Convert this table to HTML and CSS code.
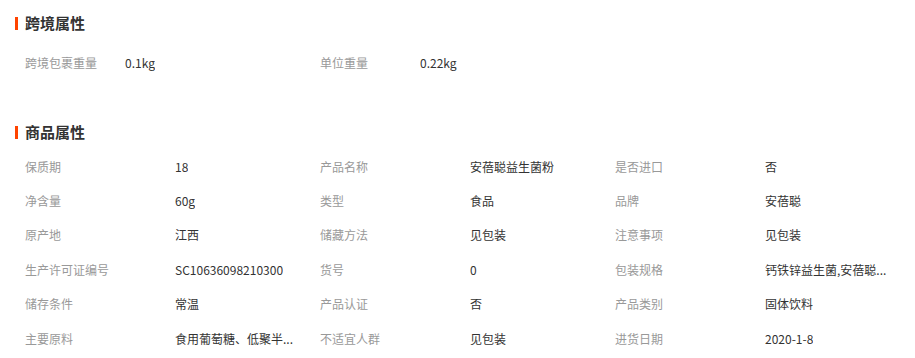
FILE: index.html
```html
<!DOCTYPE html>
<html lang="zh">
<head>
<meta charset="utf-8">
<link rel="stylesheet" href="styles.css">
</head>
<body>
<section class="block cross">
  <h2 class="title">跨境属性</h2>
  <div class="grid grid-cross">
    <div class="item"><span class="label">跨境包裹重量</span><span class="value">0.1kg</span></div>
    <div class="item"><span class="label">单位重量</span><span class="value">0.22kg</span></div>
  </div>
</section>
<section class="block goods">
  <h2 class="title">商品属性</h2>
  <div class="grid grid-goods">
    <div class="item"><span class="label">保质期</span><span class="value">18</span></div>
    <div class="item"><span class="label">产品名称</span><span class="value">安蓓聪益生菌粉</span></div>
    <div class="item"><span class="label">是否进口</span><span class="value">否</span></div>
    <div class="item"><span class="label">净含量</span><span class="value">60g</span></div>
    <div class="item"><span class="label">类型</span><span class="value">食品</span></div>
    <div class="item"><span class="label">品牌</span><span class="value">安蓓聪</span></div>
    <div class="item"><span class="label">原产地</span><span class="value">江西</span></div>
    <div class="item"><span class="label">储藏方法</span><span class="value">见包装</span></div>
    <div class="item"><span class="label">注意事项</span><span class="value">见包装</span></div>
    <div class="item"><span class="label">生产许可证编号</span><span class="value">SC10636098210300</span></div>
    <div class="item"><span class="label">货号</span><span class="value">0</span></div>
    <div class="item"><span class="label">包装规格</span><span class="value" title="钙铁锌益生菌,安蓓聪益生菌粉">钙铁锌益生菌,安蓓聪...</span></div>
    <div class="item"><span class="label">储存条件</span><span class="value">常温</span></div>
    <div class="item"><span class="label">产品认证</span><span class="value">否</span></div>
    <div class="item"><span class="label">产品类别</span><span class="value">固体饮料</span></div>
    <div class="item"><span class="label">主要原料</span><span class="value" title="食用葡萄糖、低聚半乳糖、益生菌">食用葡萄糖、低聚半...</span></div>
    <div class="item"><span class="label">不适宜人群</span><span class="value">见包装</span></div>
    <div class="item"><span class="label">进货日期</span><span class="value">2020-1-8</span></div>
  </div>
</section>
</body>
</html>
```
FILE: styles.css
```css
html, body {
  margin: 0;
  padding: 0;
  background: #fff;
}
body {
  font-family: "Microsoft YaHei", "Noto Sans CJK SC", "Noto Sans", sans-serif;
  font-size: 12px;
  color: #333;
}
.block {
  padding-left: 15px;
}
.cross {
  padding-top: 13px;
}
.goods {
  padding-top: 50px;
}
.title {
  margin: 0;
  display: flex;
  align-items: center;
  gap: 7px;
  font-size: 15px;
  font-weight: bold;
  line-height: 20px;
  color: #333;
}
.title::before {
  content: "";
  display: block;
  width: 3px;
  height: 13px;
  background: #ff4400;
}
.grid {
  display: grid;
  padding-left: 10px;
}
.grid-cross {
  grid-template-columns: repeat(2, 295px);
  margin-top: 19px;
}
.grid-cross .label {
  width: 100px;
}
.grid-cross .item {
  height: 20px;
}
.grid-goods {
  grid-template-columns: repeat(3, 295px);
  margin-top: 7px;
}
.grid-goods .item {
  height: 34.4px;
}
.grid-goods .label {
  width: 150px;
}
.grid-goods .value {
  max-width: 135px;
}
.item {
  display: flex;
  align-items: center;
}
.label {
  flex: none;
  color: #999;
  white-space: nowrap;
}
.value {
  color: #333;
  white-space: nowrap;
  overflow: hidden;
  text-overflow: ellipsis;
}
```
